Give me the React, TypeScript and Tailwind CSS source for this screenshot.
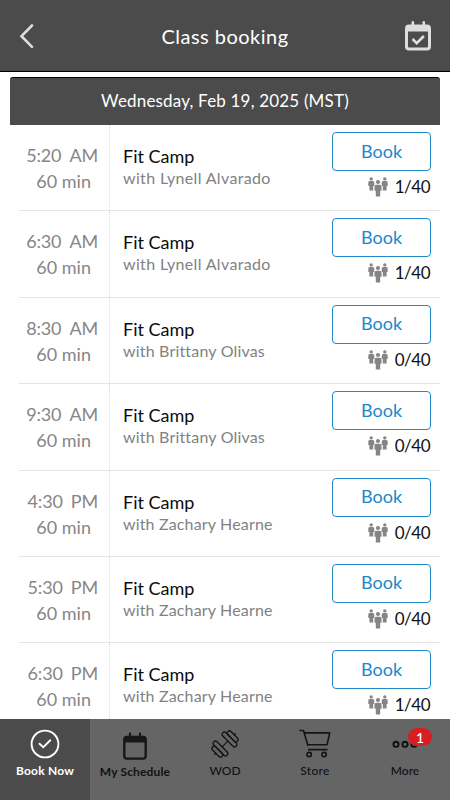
import React from "react";

const classes = [
  { time: "5:20", half: "AM", coach: "Lynell Alvarado", booked: 1, fit: "tracking-[0.34px]" },
  { time: "6:30", half: "AM", coach: "Lynell Alvarado", booked: 1, fit: "tracking-[0.34px]" },
  { time: "8:30", half: "AM", coach: "Brittany Olivas", booked: 0, fit: "tracking-[0.18px]" },
  { time: "9:30", half: "AM", coach: "Brittany Olivas", booked: 0, fit: "tracking-[0.18px]" },
  { time: "4:30", half: "PM", coach: "Zachary Hearne", booked: 0, fit: "tracking-[0.16px]" },
  { time: "5:30", half: "PM", coach: "Zachary Hearne", booked: 0, fit: "tracking-[0.16px]" },
  { time: "6:30", half: "PM", coach: "Zachary Hearne", booked: 1, fit: "tracking-[0.16px]" },
];

function People() {
  return (
    <svg className="h-5 w-5" viewBox="0 0 20 20" fill="#858585">
      <circle cx="3.2" cy="1.9" r="1.7" />
      <path d="M1.6 4h3.2q1.5 0 1.5 1.5V9H5.2v4.6H1.4V9H.3V5.5Q.3 4 1.6 4Z" />
      <circle cx="16.8" cy="1.9" r="1.7" />
      <path d="M15.2 4h3.2q1.3 0 1.3 1.5V9h-1.1v4.6h-3.8V9h-1.1V5.5Q13.7 4 15.2 4Z" />
      <circle cx="10" cy="5" r="2.1" />
      <path d="M8.3 7.7h3.4q1.8 0 1.8 1.8v4.2h-1.3v5.7H7.8v-5.7H6.5V9.5q0-1.8 1.8-1.8Z" />
    </svg>
  );
}

function CalendarCheck() {
  return (
    <svg className="h-[30px] w-[26px]" viewBox="0 0 26 30" fill="none">
      <path d="M7.8 1.3v4M18.8 1.3v4" stroke="#dedede" strokeWidth="2.6" strokeLinecap="round" />
      <rect x="1.5" y="5" width="23" height="23" rx="2.5" stroke="#dedede" strokeWidth="3" />
      <path d="M2 5h22v5.5H2z" fill="#dedede" />
      <path d="m7.5 18 4.2 4.2 7.2-7.2" stroke="#dedede" strokeWidth="2.6" />
    </svg>
  );
}

function Check() {
  return (
    <svg className="h-[30px] w-[30px]" viewBox="0 0 30 30" fill="none" stroke="#fff" strokeWidth="1.9">
      <circle cx="15" cy="15" r="13.4" />
      <path d="m9.5 14.7 3.8 3.5 7-6.9" strokeLinecap="round" />
    </svg>
  );
}

function Calendar() {
  return (
    <svg className="h-[30px] w-[30px]" viewBox="0 0 30 30" fill="none" stroke="#171717">
      <path d="M10 3.7v4M20 3.7v4" strokeWidth="2.2" strokeLinecap="round" />
      <rect x="4.3" y="7" width="21.4" height="21.6" rx="2.5" strokeWidth="2.4" />
      <path d="M4 7h22v5.5H4z" fill="#171717" stroke="none" />
    </svg>
  );
}

function Dumbbell() {
  return (
    <svg className="h-[30px] w-[30px]" viewBox="0 0 30 30" fill="none" stroke="#141414" strokeWidth="1.3" strokeLinecap="round">
      <g transform="rotate(-45 15 15)">
        <rect x="6.4" y="5.6" width="4.5" height="18.8" rx="2.2" />
        <rect x="19.1" y="5.6" width="4.5" height="18.8" rx="2.2" />
        <rect x="1.9" y="8.3" width="4.5" height="13.4" rx="2.2" />
        <rect x="23.6" y="8.3" width="4.5" height="13.4" rx="2.2" />
        <path d="M10.9 15h8.2M.4 15h1.5M28.1 15h1.5" />
      </g>
    </svg>
  );
}

function Cart() {
  return (
    <svg className="h-[30px] w-[30px] overflow-visible" viewBox="0 0 30 30" fill="none" stroke="#141414" strokeWidth="1.6">
      <path d="M-.5 1.5h4L8 17M4.3 3.9h25.4l-2.6 11.8H7.7M8 20.6h19.5" strokeLinejoin="round" />
      <circle cx="9.2" cy="25.6" r="2.2" />
      <circle cx="24.1" cy="25.6" r="2.2" />
    </svg>
  );
}

function Dots() {
  return (
    <svg className="h-[30px] w-[30px]" viewBox="0 0 30 30" fill="none" stroke="#111" strokeWidth="1.9">
      <circle cx="6" cy="15.3" r="2.6" />
      <circle cx="15" cy="15.3" r="2.6" />
      <circle cx="24" cy="15.3" r="2.6" />
    </svg>
  );
}

const tabs = [
  { label: "Book Now", icon: <Check />, cls: "bg-[#4b4b4b] text-white font-bold text-[12px] tracking-[0.2px]" },
  { label: "My Schedule", icon: <Calendar />, cls: "font-bold text-[12px] pt-px tracking-[0.15px]" },
  { label: "WOD", icon: <Dumbbell />, cls: "font-medium text-[12px]" },
  { label: "Store", icon: <Cart />, cls: "font-medium text-[12px] tracking-[0.3px]" },
  { label: "More", icon: <Dots />, cls: "font-medium text-[12px]" },
];

export default function App() {
  return (
    <div className="flex h-[800px] w-[450px] flex-col overflow-hidden bg-white font-[Lato,'Open_Sans',sans-serif]">
      <header className="flex h-[72px] shrink-0 items-center justify-between border-b border-black bg-[#4b4b4b] pr-[19px] pl-[19px]">
        <svg className="h-[26px] w-[26px]" viewBox="0 0 26 26" fill="none" stroke="#dedede" strokeWidth="2.6" strokeLinecap="round">
          <path d="M13 2.5 2.5 13.2 13 23.8" />
        </svg>
        <h1 className="text-[20px] leading-[26px] tracking-[0.48px] whitespace-nowrap text-white">Class booking</h1>
        <CalendarCheck />
      </header>
      <main className="flex min-h-0 flex-1 flex-col overflow-hidden px-2.5 pt-[5px]">
        <div className="flex h-12 shrink-0 items-center justify-center rounded-t-[3px] border-t border-black bg-[#4b4b4b] pb-0.5 text-[17px] tracking-[0.18px] text-white">
          Wednesday, Feb 19, 2025 (MST)
        </div>
        {classes.map((c) => (
          <div key={c.time + c.half} className="ml-[9px] flex h-[86.4px] shrink-0 border-b border-[#e5e5e5]">
            <div className="flex w-[91px] shrink-0 flex-col items-end border-r border-dotted border-[#dadada] pt-[17px] text-[18px] leading-[26px] text-[#868686]">
              <div className="flex gap-2 pr-[11px] tracking-[-0.15px]"><span>{c.time}</span><span>{c.half}</span></div>
              <div className="pr-[18px]">60 min</div>
            </div>
            <div className="flex-1 pt-[19px] pl-[13px] whitespace-nowrap">
              <div className="text-[18px] leading-6 text-[#0c0c0c]">Fit Camp</div>
              <div className={"text-[16px] leading-5 text-[#828282] " + c.fit}>with {c.coach}</div>
            </div>
            <div className="mr-[9px] flex w-[99px] shrink-0 flex-col pt-[7px]">
              <button className="h-[39px] rounded border border-[#2088c9] pb-px text-[18px] text-[#2088c9]">Book</button>
              <div className="flex items-center justify-end gap-[7px] pt-[3px] pr-px text-[17px] leading-[26px] tracking-[-0.5px] text-[#111]">
                <People /><span>{c.booked}/40</span>
              </div>
            </div>
          </div>
        ))}
      </main>
      <nav className="grid h-[81px] shrink-0 grid-cols-5 bg-[#656565]">
        {tabs.map((t) => (
          <div key={t.label} className={"relative flex flex-col items-center text-[#111] " + t.cls}>
            <div className="mt-[10px]">{t.icon}</div>
            <span className="mt-1 leading-4 whitespace-nowrap">{t.label}</span>
            {t.label === "More" && (
              <span className="absolute top-[9px] left-[48px] flex h-[18px] w-6 items-center justify-center rounded-full bg-[#d71f22] text-[14px] text-white">1</span>
            )}
          </div>
        ))}
      </nav>
    </div>
  );
}
